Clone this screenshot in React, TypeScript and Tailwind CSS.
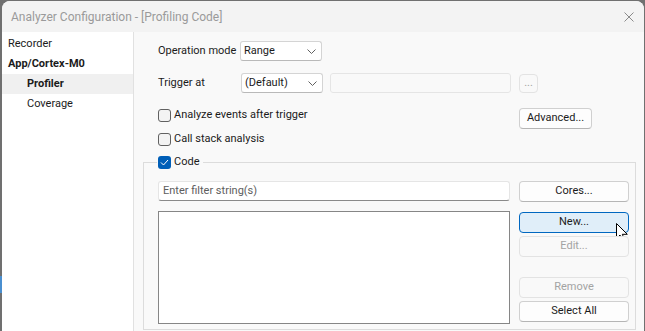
import React from 'react';

function Chevron() {
  return (
    <svg width="9" height="5" viewBox="0 0 9 5" className="text-[#606060]">
      <path d="M0.5 0.5 L4.5 4.5 L8.5 0.5" fill="none" stroke="currentColor" strokeWidth="1" />
    </svg>
  );
}

function Dropdown({ value }: { value: string }) {
  return (
    <div className="flex h-[20px] w-[82px] items-center justify-between rounded-[3px] border border-[#d4d4d4] border-b-[#b9b9b9] bg-white pl-[3px] pr-[5px]">
      <span>{value}</span>
      <Chevron />
    </div>
  );
}

function CheckBox({ label, checked = false }: { label: string; checked?: boolean }) {
  return (
    <div className="flex h-[14px] items-center gap-[3px]">
      {checked ? (
        <span className="flex h-[13px] w-[13px] items-center justify-center rounded-[3px] bg-[#005fb8]">
          <svg width="9" height="7" viewBox="0 0 9 7">
            <path d="M1 3.5 L3.5 6 L8 1" fill="none" stroke="white" strokeWidth="1" />
          </svg>
        </span>
      ) : (
        <span className="h-[13px] w-[13px] rounded-[3px] border border-[#616161] bg-[#f3f3f3]" />
      )}
      <span>{label}</span>
    </div>
  );
}

function Button({
  label,
  disabled = false,
  hover = false,
  className = '',
  children,
}: {
  label: string;
  disabled?: boolean;
  hover?: boolean;
  className?: string;
  children?: React.ReactNode;
}) {
  const look = disabled
    ? 'border-[#e3e3e3] bg-[#f9f9f9] text-[#a3a3a3]'
    : hover
      ? 'border-[#0067c0] bg-[#e0eef9] text-[#1b1b1b]'
      : 'border-[#d0d0d0] border-b-[#b5b5b5] bg-[#fdfdfd] text-[#1b1b1b]';
  return (
    <div
      className={`relative flex h-[21px] items-center justify-center rounded-[4px] border ${look} ${className}`}
    >
      {label}
      {children}
    </div>
  );
}

function Cursor() {
  return (
    <svg
      width="13"
      height="20"
      viewBox="0 0 13 20"
      className="absolute left-[96px] top-[10px]"
    >
      <path
        d="M0.5 0.5 L0.5 15.5 L4 12 L6.6 18 L8.8 17 L6.3 11.3 L11.3 11.3 Z"
        fill="white"
        stroke="black"
        strokeWidth="1"
        strokeLinejoin="round"
      />
    </svg>
  );
}

export default function App() {
  return (
    <div className="flex h-[331px] w-[645px] overflow-hidden bg-[#707070] font-['Roboto',sans-serif] text-[11px] text-[#1b1b1b]">
      <div className="flex w-[2px] flex-col">
        <div className="mt-[276px] h-[17px] w-[2px] bg-[#4a8fd0]" />
      </div>
      <div className="mt-[1px] flex h-[340px] w-[642px] flex-col overflow-hidden rounded-t-[8px] bg-[#f9f9f9]">
        <div className="flex h-[31px] items-center justify-between bg-[#f3f3f3] pl-[9px] pr-[10px] text-[12px] text-[#9a9a9a]">
          <span>Analyzer Configuration - [Profiling Code]</span>
          <svg width="10" height="10" viewBox="0 0 10 10">
            <path d="M0.5 0.5 L9.5 9.5 M9.5 0.5 L0.5 9.5" stroke="#8a8a8a" strokeWidth="1" />
          </svg>
        </div>
        <div className="flex flex-1">
          <div className="w-[132px] border-r border-[#e1e1e1] bg-white pt-[2px]">
            <div className="flex h-[20px] items-center pl-[6px]">Recorder</div>
            <div className="flex h-[20px] items-center pl-[6px] font-bold">App/Cortex-M0</div>
            <div className="flex h-[20px] items-center bg-[#f0f0f0] pl-[25px] font-bold">Profiler</div>
            <div className="flex h-[20px] items-center pl-[25px]">Coverage</div>
          </div>
          <div className="flex flex-1 flex-col pl-[9px] pt-[9px]">
            <div className="pl-[15px]">
              <div className="flex h-[20px] items-center">
                <span className="w-[82px]">Operation mode</span>
                <Dropdown value="Range" />
              </div>
              <div className="mt-[12px] flex h-[20px] items-center">
                <span className="w-[83px]">Trigger at</span>
                <Dropdown value="(Default)" />
                <div className="ml-[7px] h-[20px] w-[181px] rounded-[3px] border border-[#e5e5e5] bg-[#f9f9f9]" />
                <div className="ml-[8px] flex h-[19px] w-[19px] items-center justify-center rounded-[4px] border border-[#e3e3e3] bg-[#f9f9f9] text-[#a3a3a3]">
                  ...
                </div>
              </div>
              <div className="mt-[15px] flex h-[21px] items-start">
                <div className="w-[361px]">
                  <CheckBox label="Analyze events after trigger" />
                </div>
                <Button label="Advanced..." className="w-[73px]" />
              </div>
              <div className="mt-[3px]">
                <CheckBox label="Call stack analysis" />
              </div>
            </div>
            <div className="relative mt-[16px] h-[168px] w-[493px] border border-[#dcdcdc] pl-[14px] pr-[6px] pt-[18px]">
              <div className="absolute -top-[8px] left-[13px] bg-[#f9f9f9] pl-[1px] pr-[4px]">
                <CheckBox label="Code" checked />
              </div>
              <div className="flex items-start">
                <div className="flex h-[20px] w-[352px] items-center rounded-[3px] border border-[#e5e5e5] border-b-[#8a8a8a] bg-white pl-[4px] text-[#5d5d5d]">
                  Enter filter string(s)
                </div>
                <Button label="Cores..." className="ml-[9px] w-[110px]" />
              </div>
              <div className="mt-[9px] flex items-start">
                <div className="h-[113px] w-[352px] border border-[#868686] bg-white" />
                <div className="ml-[9px] flex w-[110px] flex-col pt-[1px]">
                  <Button label="New..." hover>
                    <Cursor />
                  </Button>
                  <Button label="Edit..." disabled className="mt-[3px]" />
                  <Button label="Remove" disabled className="mt-[20px]" />
                  <Button label="Select All" className="mt-[3px]" />
                </div>
              </div>
            </div>
          </div>
        </div>
      </div>
    </div>
  );
}
